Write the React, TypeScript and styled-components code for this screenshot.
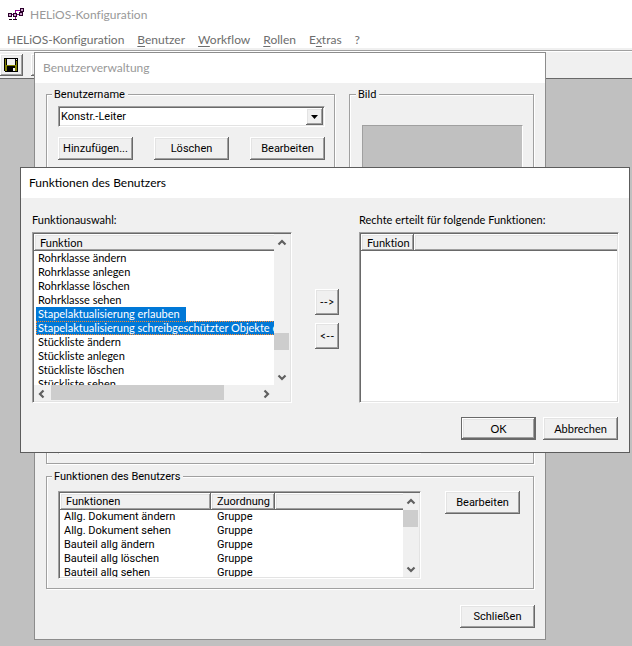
import React from "react";
import styled, { createGlobalStyle, css } from "styled-components";

const font = {
  caption: 'Lato, "Open Sans", sans-serif',
  dialog: 'Roboto, "Noto Sans", sans-serif',
  compact: 'Lato, "Liberation Sans", sans-serif',
};

const color = {
  face: "#f0f0f0",
  light: "#e3e3e3",
  shadow: "#a0a0a0",
  dark: "#696969",
  workspace: "#c0c0c0",
  thumb: "#cdcdcd",
  glyph: "#606060",
  select: "#0078d7",
};

const GlobalStyle = createGlobalStyle`
  * { box-sizing: border-box; font-variant-ligatures: none; }
  body { margin: 0; background: ${color.workspace}; color: #000; }
  button, select { font: inherit; color: inherit; border-radius: 0; }
`;

const sunken = css`
  border: 1px solid;
  border-color: ${color.shadow} #fff #fff ${color.shadow};
  padding: 1px;
  box-shadow: inset 1px 1px 0 ${color.dark}, inset -1px -1px 0 ${color.light};
`;

const raised = css`
  background: ${color.face};
  box-shadow: inset -1px -1px 0 ${color.dark}, inset 1px 1px 0 #fff,
    inset -2px -2px 0 ${color.shadow}, inset 2px 2px 0 ${color.light};
`;

const Desktop = styled.div`
  position: relative;
  min-height: 100vh;
  overflow: hidden;
  font: 12px/16px ${font.caption};
`;

const AppTitle = styled.header`
  display: flex;
  align-items: center;
  gap: 6px;
  height: 30px;
  padding-left: 8px;
  background: #fff;
  color: #999;
`;

const MenuBar = styled.nav`
  display: flex;
  gap: 13px;
  height: 20px;
  padding-left: 7px;
  background: #fff;
  border-bottom: 2px solid ${color.face};
`;

const MenuItem = styled.button`
  border: 0;
  padding: 2px 0 0;
  background: none;
  color: #6d6d6d;
  line-height: 16px;
  white-space: nowrap;
  u { text-underline-offset: 2px; }
`;

const ToolBar = styled.div`
  display: flex;
  gap: 8px;
  height: 29px;
  padding-top: 2px;
  background: ${color.face};
  border-top: 1px solid ${color.shadow};
  border-bottom: 1px solid ${color.dark};
  box-shadow: inset 0 1px 0 #fff;
`;

const ToolButton = styled.button`
  ${raised}
  display: grid;
  place-items: center;
  width: 23px;
  height: 22px;
  margin-top: 1px;
  border: 0;
  padding: 0 1px 0 0;
`;

const Window = styled.section<{ $modal?: boolean }>`
  position: absolute;
  top: ${(p) => (p.$modal ? 167 : 52)}px;
  left: ${(p) => (p.$modal ? 20 : 34)}px;
  right: ${(p) => (p.$modal ? 2 : 86)}px;
  background: ${color.face};
  border: 1px solid ${(p) => (p.$modal ? "#5c5c5c" : "#8c8c8c")};
  font: 11px/14px ${(p) => (p.$modal ? font.compact : font.dialog)};
`;

const WindowTitle = styled.h2<{ $inactive?: boolean }>`
  margin: 0;
  height: 30px;
  padding-left: 8px;
  background: #fff;
  color: ${(p) => (p.$inactive ? "#999" : "#000")};
  font: 12px/30px ${font.caption};
`;

const FormBody = styled.div`
  display: flex;
  flex-direction: column;
  padding: 5px 10px 11px 11px;
`;

const UserRow = styled.div`
  display: grid;
  grid-template-columns: minmax(0, 1fr) 185px;
  gap: 14px;
  margin: 0 1px 12px 0;
`;

const GroupBox = styled.fieldset`
  min-width: 0;
  margin: 0;
  padding: 5px 9px 9px 11px;
  border: 1px solid ${color.shadow};
  box-shadow: 1px 1px 0 #fff, inset 1px 1px 0 #fff;
`;

const Legend = styled.legend`
  margin-left: -6px;
  padding: 0 3px 0 2px;
  background: ${color.face};
  line-height: 13px;
`;

const PictureGroup = styled(GroupBox)`
  padding: 24px 10px 12px 12px;
`;

const Picture = styled.div`
  height: 180px;
  background: ${color.workspace};
  border: 1px solid;
  border-color: ${color.shadow} #fff #fff ${color.shadow};
`;

const AssignmentGroup = styled(GroupBox)`
  margin: 0 1px 6px 0;
  padding: 12px 112px 9px 11px;
`;

const FunctionGroup = styled(GroupBox)`
  margin-right: 1px;
  padding: 8px 13px 9px 11px;
`;

const FunctionRow = styled.div`
  display: flex;
  align-items: flex-start;
  gap: 24px;
`;

const Combo = styled.div`
  ${sunken}
  display: grid;
  grid-template-columns: minmax(0, 1fr) 17px;
  height: 21px;
  margin-bottom: 10px;
  background: #fff;
`;

const ComboSelect = styled.select`
  grid-area: 1 / 1 / 2 / 3;
  appearance: none;
  border: 0;
  padding: 0 18px 0 1px;
  background: none;
  outline: none;
`;

const ComboArrow = styled.span`
  ${raised}
  grid-area: 1 / 2;
  display: grid;
  place-items: center;
  pointer-events: none;
`;

const ButtonRow = styled.div<{ $end?: boolean }>`
  display: flex;
  justify-content: ${(p) => (p.$end ? "flex-end" : "space-between")};
  gap: 7px;
`;

const PushButton = styled.button<{ $default?: boolean }>`
  ${raised}
  flex: none;
  width: 75px;
  height: 23px;
  padding: 0;
  border: 0 solid ${color.dark};
  border-width: ${(p) => (p.$default ? 1 : 0)}px;
  white-space: nowrap;
`;

const MoveButton = styled(PushButton)`
  width: 24px;
  height: 26px;
`;

const CloseRow = styled(ButtonRow)`
  margin-top: 16px;
`;

const ConfirmRow = styled(ButtonRow)`
  padding-right: 1px;
`;

const ListFrame = styled.div<{ $height: number }>`
  ${sunken}
  display: grid;
  grid-template-columns: minmax(0, 1fr) auto;
  grid-template-rows: minmax(0, 1fr) auto;
  flex: 1;
  min-width: 0;
  height: ${(p) => p.$height}px;
  background: #fff;
`;

const ListView = styled.div`
  overflow: hidden;
`;

const Table = styled.table`
  width: 100%;
  table-layout: fixed;
  border-collapse: separate;
  border-spacing: 0;
  white-space: nowrap;
`;

const HeadCell = styled.th<{ $width?: number }>`
  ${raised}
  width: ${(p) => (p.$width ? `${p.$width}px` : "auto")};
  height: 17px;
  padding: 1px 0 0 6px;
  font-weight: normal;
  text-align: left;

  &:last-child {
    box-shadow: inset 0 -1px 0 ${color.dark}, inset 1px 1px 0 #fff,
      inset 0 -2px 0 ${color.shadow}, inset 2px 2px 0 ${color.light};
  }
`;

const Cell = styled.td<{ $inset: number }>`
  height: 14px;
  padding: 0 0 0 ${(p) => p.$inset}px;
  overflow: hidden;
`;

const ItemText = styled.span<{ $selected?: boolean; $focused?: boolean }>`
  display: block;
  width: max-content;
  padding: 0 6px 0 2px;
  background: ${(p) => (p.$selected ? color.select : "none")};
  color: ${(p) => (p.$selected ? "#fff" : "#000")};
  outline: ${(p) => (p.$focused ? "1px dotted #ff8728" : "none")};
  outline-offset: -1px;
`;

const ScrollBar = styled.div<{ $horizontal?: boolean }>`
  display: flex;
  flex-direction: ${(p) => (p.$horizontal ? "row" : "column")};
  ${(p) => (p.$horizontal ? "height" : "width")}: 16px;
  background: ${color.face};
`;

const ScrollButton = styled.button`
  display: grid;
  place-items: center;
  flex: none;
  width: 16px;
  height: 17px;
  border: 0;
  padding: 0 1px 0 0;
  background: none;
`;

const Track = styled.div<{ $horizontal?: boolean }>`
  display: flex;
  flex: 1;
  flex-direction: ${(p) => (p.$horizontal ? "row" : "column")};
  min-width: 0;
  min-height: 0;
`;

const Thumb = styled.div<{ $start: string; $size: string; $horizontal?: boolean }>`
  flex: none;
  background: ${color.thumb};
  ${(p) =>
    p.$horizontal
      ? css`margin: 0 0 1px ${p.$start}; width: ${p.$size};`
      : css`margin: ${p.$start} 1px 0 0; height: ${p.$size};`}
`;

const Corner = styled.div`
  background: ${color.face};
`;

const ModalBody = styled.div`
  padding: 15px 10px 12px 11px;
`;

const Transfer = styled.div`
  display: grid;
  grid-template-columns: minmax(0, 1fr) 27px minmax(0, 1fr);
  gap: 20px;
  margin-bottom: 14px;
`;

const ListLabel = styled.div`
  margin-bottom: 5px;
  white-space: nowrap;
`;

const MoveColumn = styled.div`
  display: flex;
  flex-direction: column;
  align-items: flex-end;
  gap: 8px;
  padding-top: 76px;
`;

const chevrons = {
  up: "M1.5 6.5 5 3 8.5 6.5",
  down: "M1.5 3.5 5 7 8.5 3.5",
  left: "M6.5 1.5 3 5 6.5 8.5",
  right: "M3.5 1.5 7 5 3.5 8.5",
};

function Chevron({ to }: { to: keyof typeof chevrons }) {
  return (
    <svg width="10" height="10" viewBox="0 0 10 10" aria-hidden="true">
      <path d={chevrons[to]} fill="none" stroke={color.glyph} strokeWidth="2.2" />
    </svg>
  );
}

function VerticalScroll({ start, size = "17px" }: { start: string; size?: string }) {
  return (
    <ScrollBar>
      <ScrollButton type="button"><Chevron to="up" /></ScrollButton>
      <Track><Thumb $start={start} $size={size} /></Track>
      <ScrollButton type="button"><Chevron to="down" /></ScrollButton>
    </ScrollBar>
  );
}

function AppIcon() {
  return (
    <svg width="16" height="16" viewBox="0 0 16 16" shapeRendering="crispEdges" aria-hidden="true">
      <path d="M3 7h9v1H3zM7 3h5v1H7zM7 3h1v9H7z" fill="#900090" />
      <path d="M0 6h4v4H0zM5 6h4v4H5zM11 5h4v4h-4zM12 1h4v4h-4z" fill="#2a002a" />
      <path d="M1 7h2v2H1zM6 7h2v2H6zM12 6h2v2h-2zM13 2h2v2h-2z" fill="#c9a0c9" />
      <path d="M1 12h3v1H1zM5 12h4v1H5z" fill="#1a001a" />
    </svg>
  );
}

function SaveIcon() {
  return (
    <svg width="14" height="14" viewBox="0 0 14 14" shapeRendering="crispEdges" aria-hidden="true">
      <path d="M0 0h14v14H1L0 13z" fill="#000" />
      <path d="M1 1h1v12H1zM12 3h1v10h-1zM2 7h10v1H2zM2 8h1v5H2zM11 8h1v5h-1z" fill="#808000" />
      <path d="M3 1h8v6H3zM9 10h2v3H9z" fill="#f0f0f0" />
      <path d="M12 1h1v1h-1z" fill="#f0f0f0" />
    </svg>
  );
}

function DashIcon() {
  return (
    <svg width="16" height="14" viewBox="0 0 16 14" shapeRendering="crispEdges" aria-hidden="true">
      <path d="M0 7h14v1H0z" fill="#000" />
    </svg>
  );
}

const menus = [
  ["", "", "HELiOS-Konfiguration"],
  ["", "B", "enutzer"],
  ["", "W", "orkflow"],
  ["", "R", "ollen"],
  ["E", "x", "tras"],
  ["", "", "?"],
];

const assigned = [
  "Allg. Dokument ändern",
  "Allg. Dokument sehen",
  "Bauteil allg ändern",
  "Bauteil allg löschen",
  "Bauteil allg sehen",
];

const available = [
  { name: "Rohrklasse ändern" },
  { name: "Rohrklasse anlegen" },
  { name: "Rohrklasse löschen" },
  { name: "Rohrklasse sehen" },
  { name: "Stapelaktualisierung erlauben", selected: true },
  { name: "Stapelaktualisierung schreibgeschützter Objekte erlauben", selected: true, focused: true },
  { name: "Stückliste ändern" },
  { name: "Stückliste anlegen" },
  { name: "Stückliste löschen" },
  { name: "Stückliste sehen" },
];

function UserAdministration() {
  return (
    <Window aria-labelledby="users-title">
      <WindowTitle id="users-title" $inactive>Benutzerverwaltung</WindowTitle>
      <FormBody>
        <UserRow>
          <GroupBox>
            <Legend id="user-name">Benutzername</Legend>
            <Combo>
              <ComboSelect aria-labelledby="user-name">
                <option>Konstr.-Leiter</option>
              </ComboSelect>
              <ComboArrow>
                <svg width="7" height="4" viewBox="0 0 7 4" aria-hidden="true">
                  <path d="M0 0h7L3.5 4z" />
                </svg>
              </ComboArrow>
            </Combo>
            <ButtonRow>
              <PushButton type="button">Hinzufügen...</PushButton>
              <PushButton type="button">Löschen</PushButton>
              <PushButton type="button">Bearbeiten</PushButton>
            </ButtonRow>
          </GroupBox>
          <PictureGroup>
            <Legend>Bild</Legend>
            <Picture />
          </PictureGroup>
        </UserRow>
        <AssignmentGroup>
          <ListFrame $height={111} />
        </AssignmentGroup>
        <FunctionGroup>
          <Legend>Funktionen des Benutzers</Legend>
          <FunctionRow>
            <ListFrame $height={88}>
              <ListView>
                <Table>
                  <thead>
                    <tr>
                      <HeadCell $width={151}>Funktionen</HeadCell>
                      <HeadCell $width={64}>Zuordnung</HeadCell>
                      <HeadCell />
                    </tr>
                  </thead>
                  <tbody>
                    {assigned.map((name) => (
                      <tr key={name}>
                        <Cell $inset={4}>{name}</Cell>
                        <Cell $inset={6}>Gruppe</Cell>
                        <Cell $inset={0} />
                      </tr>
                    ))}
                  </tbody>
                </Table>
              </ListView>
              <VerticalScroll start="0px" />
            </ListFrame>
            <PushButton type="button">Bearbeiten</PushButton>
          </FunctionRow>
        </FunctionGroup>
        <CloseRow $end>
          <PushButton type="button">Schließen</PushButton>
        </CloseRow>
      </FormBody>
    </Window>
  );
}

function UserFunctions() {
  return (
    <Window $modal role="dialog" aria-labelledby="functions-title">
      <WindowTitle id="functions-title">Funktionen des Benutzers</WindowTitle>
      <ModalBody>
        <Transfer>
          <div>
            <ListLabel id="available-label">Funktionauswahl:</ListLabel>
            <ListFrame $height={171}>
              <ListView>
                <Table aria-labelledby="available-label">
                  <thead>
                    <tr><HeadCell>Funktion</HeadCell></tr>
                  </thead>
                  <tbody>
                    {available.map((item) => (
                      <tr key={item.name}>
                        <Cell $inset={2}>
                          <ItemText $selected={item.selected} $focused={item.focused}>
                            {item.name}
                          </ItemText>
                        </Cell>
                      </tr>
                    ))}
                  </tbody>
                </Table>
              </ListView>
              <VerticalScroll start="82px" />
              <ScrollBar $horizontal>
                <ScrollButton type="button"><Chevron to="left" /></ScrollButton>
                <Track $horizontal><Thumb $horizontal $start="1px" $size="83%" /></Track>
                <ScrollButton type="button"><Chevron to="right" /></ScrollButton>
              </ScrollBar>
              <Corner />
            </ListFrame>
          </div>
          <MoveColumn>
            <MoveButton type="button">{"-->"}</MoveButton>
            <MoveButton type="button">{"<--"}</MoveButton>
          </MoveColumn>
          <div>
            <ListLabel id="granted-label">Rechte erteilt für folgende Funktionen:</ListLabel>
            <ListFrame $height={171}>
              <ListView>
                <Table aria-labelledby="granted-label">
                  <thead>
                    <tr>
                      <HeadCell $width={53}>Funktion</HeadCell>
                      <HeadCell />
                    </tr>
                  </thead>
                </Table>
              </ListView>
            </ListFrame>
          </div>
        </Transfer>
        <ConfirmRow $end>
          <PushButton type="button" $default>OK</PushButton>
          <PushButton type="button">Abbrechen</PushButton>
        </ConfirmRow>
      </ModalBody>
    </Window>
  );
}

export default function App() {
  return (
    <>
      <GlobalStyle />
      <Desktop>
        <AppTitle>
          <AppIcon />
          HELiOS-Konfiguration
        </AppTitle>
        <MenuBar>
          {menus.map(([before, key, after]) => (
            <MenuItem type="button" key={after}>
              {before}
              {key && <u>{key}</u>}
              {after}
            </MenuItem>
          ))}
        </MenuBar>
        <ToolBar>
          <ToolButton type="button" aria-label="Speichern"><SaveIcon /></ToolButton>
          <ToolButton type="button"><DashIcon /></ToolButton>
        </ToolBar>
        <UserAdministration />
        <UserFunctions />
      </Desktop>
    </>
  );
}
